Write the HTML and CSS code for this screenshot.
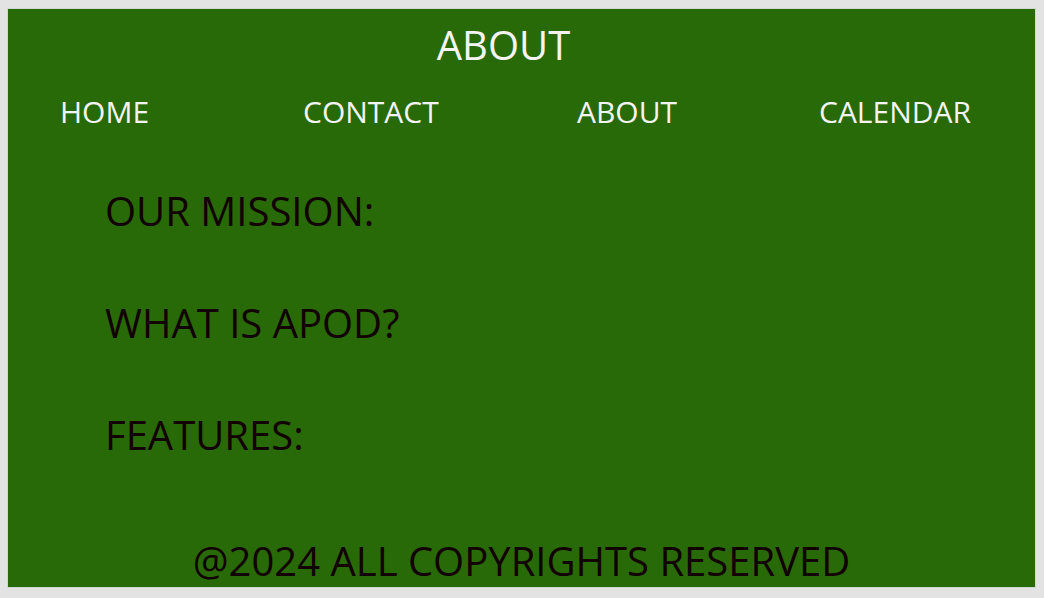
FILE: index.html
```html
<!DOCTYPE html>
<html lang="en">
<head>
<meta charset="utf-8">
<title>About</title>
<link rel="stylesheet" href="styles.css">
</head>
<body>
<div class="page">
  <header class="top">
    <h1 class="title">ABOUT</h1>
    <nav class="nav">
      <a class="nav-link" href="#">HOME</a>
      <a class="nav-link" href="#">CONTACT</a>
      <a class="nav-link" href="#">ABOUT</a>
      <a class="nav-link" href="#">CALENDAR</a>
    </nav>
  </header>
  <main class="content">
    <h2 class="section">OUR MISSION:</h2>
    <h2 class="section">WHAT IS APOD?</h2>
    <h2 class="section">FEATURES:</h2>
  </main>
  <footer class="footer">@2024 ALL COPYRIGHTS RESERVED</footer>
</div>
</body>
</html>
```

FILE: styles.css
```css
html, body {
  margin: 0;
  padding: 0;
}
body {
  background: #e3e3e3;
  padding: 8px 8px 10px 7px;
  height: 598px;
  box-sizing: border-box;
  font-family: "Open Sans", "Noto Sans", sans-serif;
}
.page {
  background: #296a08;
  border: 1px solid #cfd8cc;
  height: 100%;
  box-sizing: border-box;
  display: flex;
  flex-direction: column;
}
.top {
  display: flex;
  flex-direction: column;
}
.title {
  margin: 12px 36px 0 0;
  text-align: center;
  font-weight: 400;
  font-size: 40px;
  line-height: 48px;
  color: #f4f4f4;
}
.nav {
  display: grid;
  grid-template-columns: 243px 274px 242px auto;
  padding-left: 52px;
  margin-top: 25px;
}
.nav-link {
  color: #f4f4f4;
  text-decoration: none;
  font-size: 30px;
  line-height: 36px;
}
.content {
  flex: 1;
  padding-left: 97px;
  padding-top: 57px;
}
.section {
  margin: 0 0 64px;
  font-weight: 400;
  font-size: 40px;
  line-height: 48px;
  color: #120000;
}
.footer {
  text-align: center;
  font-size: 40px;
  line-height: 48px;
  color: #120000;
  padding-bottom: 2px;
}
```
